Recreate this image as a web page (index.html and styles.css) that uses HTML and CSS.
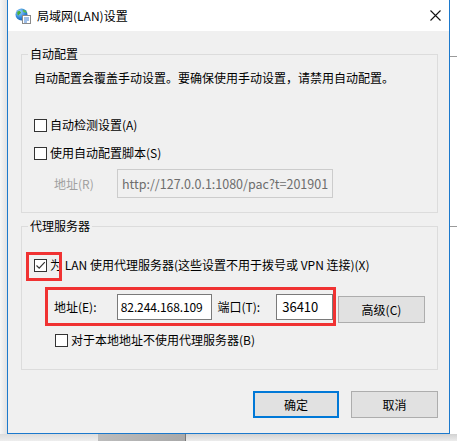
FILE: index.html
```html
<!DOCTYPE html>
<html lang="zh-CN">
<head>
<meta charset="utf-8">
<title>局域网(LAN)设置</title>
<link rel="stylesheet" href="styles.css">
</head>
<body>
<div class="screen">
  <div class="side-left"></div>
  <div class="dialog">
    <div class="titlebar">
      <svg class="app-icon" width="16" height="16" viewBox="0 0 16 16">
        <defs>
          <radialGradient id="gl" cx="0.35" cy="0.3" r="0.8">
            <stop offset="0" stop-color="#9fd4ff"/>
            <stop offset="0.6" stop-color="#2f86d8"/>
            <stop offset="1" stop-color="#1a5aa8"/>
          </radialGradient>
        </defs>
        <circle cx="6.5" cy="6.5" r="6" fill="url(#gl)"/>
        <path d="M2.5 3.5 C4 2.5 5.5 3 6 4.5 C5.5 6 4 6 3.5 7.5 C2.5 7 1.8 5.5 2.5 3.5 Z" fill="#4caf3a"/>
        <path d="M7.5 1.5 C9.5 1.8 11 3 11.8 4.5 C10.5 5 9 4.5 8.2 3.5 Z" fill="#5bbf42"/>
        <rect x="7.5" y="7.5" width="8" height="8" fill="#fff" stroke="#8a8a8a"/>
        <path d="M9 10h5M9 12h5M9 14h3" stroke="#3f7fd0" stroke-width="1"/>
      </svg>
      <span class="title">局域网(LAN)设置</span>
      <svg class="close" width="11" height="11" viewBox="0 0 11 11">
        <path d="M0.5 0.5L10.5 10.5M10.5 0.5L0.5 10.5" stroke="#111" stroke-width="1.1"/>
      </svg>
    </div>
    <div class="content">
      <fieldset class="group">
        <legend>自动配置</legend>
        <div class="gbody g1">
          <p class="desc">自动配置会覆盖手动设置。要确保使用手动设置，请禁用自动配置。</p>
          <div class="row cb-row r-detect"><span class="cb"></span><span>自动检测设置(A)</span></div>
          <div class="row cb-row r-script"><span class="cb"></span><span>使用自动配置脚本(S)</span></div>
          <div class="row addr-row">
            <span class="lbl disabled">地址(R)</span>
            <span class="input input-disabled"><span class="clip-text">http://127.0.0.1:1080/pac?t=20190117</span></span>
          </div>
        </div>
      </fieldset>
      <fieldset class="group g2-set">
        <legend>代理服务器</legend>
        <div class="gbody g2">
          <div class="row cb-row r-use">
            <span class="cb checked">
              <svg width="11" height="11" viewBox="0 0 11 11"><path d="M1.5 5.5L4.2 8.2L9.8 2.2" fill="none" stroke="#333" stroke-width="1.2"/></svg>
            </span>
            <span>为 LAN 使用代理服务器(这些设置不用于拨号或 VPN 连接)(X)</span>
            <span class="mark mark-cb"></span>
          </div>
          <div class="row proxy-row">
            <div class="mark-box">
              <span class="lbl lbl-addr">地址(E):</span>
              <span class="input input-addr">82.244.168.109</span>
              <span class="lbl lbl-port">端口(T):</span>
              <span class="input input-port">36410</span>
            </div>
            <span class="btn btn-adv">高级(C)</span>
          </div>
          <div class="row cb-row r-local"><span class="cb"></span><span>对于本地地址不使用代理服务器(B)</span></div>
        </div>
      </fieldset>
      <div class="actions">
        <span class="btn btn-ok">确定</span>
        <span class="btn btn-cancel">取消</span>
      </div>
    </div>
  </div>
  <div class="side-right">
    <div class="sr-line sr-1"></div>
    <div class="sr-line sr-2"></div>
  </div>
</div>
<div class="bottom-strip">
  <div class="bs-a"></div>
  <div class="bs-b"></div>
  <div class="bs-c"></div>
</div>
</body>
</html>
```

FILE: styles.css
```css
* { box-sizing: border-box; }

html, body {
  margin: 0;
  padding: 0;
}

body {
  width: 457px;
  height: 441px;
  overflow: hidden;
  background: #fff;
  font-family: "Noto Sans CJK SC", "Microsoft YaHei", sans-serif;
  font-size: 12px;
  color: #000;
}

.screen {
  display: flex;
  height: 434px;
}

.side-left {
  width: 7px;
  background: linear-gradient(to right, #f6f6f6, #e2e2e2);
}

.dialog {
  width: 443px;
  border: 1px solid #1c79cc;
  border-top: 0;
  background: #f0f0f0;
  display: flex;
  flex-direction: column;
}

.titlebar {
  height: 31px;
  flex: none;
  background: #fff;
  display: flex;
  align-items: center;
  padding-left: 7px;
}

.app-icon {
  flex: none;
  margin-right: 6px;
}

.title {
  flex: 1;
  font-size: 12px;
  line-height: 16px;
}

.close {
  flex: none;
  margin-right: 8px;
}

.content {
  flex: 1;
  padding: 15px 11px 0 13px;
  display: flex;
  flex-direction: column;
}

.group {
  margin: 0;
  padding: 0;
  border: 1px solid #dcdcdc;
  min-width: 0;
}

.group legend {
  margin-left: 6px;
  padding: 0 2px;
  line-height: 16px;
}

.g2-set {
  margin-top: 5px;
}

.gbody {
  padding: 0 12px;
}

.row {
  display: flex;
  align-items: center;
  line-height: 16px;
}

.desc {
  margin: 8px 0 0;
  line-height: 16px;
  white-space: nowrap;
}

.cb {
  flex: none;
  width: 13px;
  height: 13px;
  border: 1px solid #333;
  background: #fff;
  margin-right: 3px;
  display: flex;
  align-items: center;
  justify-content: center;
}

.r-detect { margin-top: 31px; }
.r-script { margin-top: 12px; }

.addr-row {
  margin-top: 8px;
  padding-left: 20px;
  padding-bottom: 14px;
}

.lbl.disabled {
  color: #a0a0a0;
  width: 63px;
}

.input {
  display: flex;
  align-items: center;
  background: #fff;
  border: 1px solid #7a7a7a;
  white-space: nowrap;
  overflow: hidden;
  font-size: 13px;
}

.input-disabled {
  width: 216px;
  height: 29px;
  background: #f0f0f0;
  border-color: #cccccc;
  color: #6d6d6d;
  padding-left: 4px;
  font-size: 12.5px;
}

.clip-text {
  flex: none;
  width: 206px;
  overflow: hidden;
}

.r-use {
  position: relative;
  margin-top: 23px;
}

.mark {
  position: absolute;
  border: 3px solid #f03232;
}

.mark-cb {
  left: -8px;
  top: -5px;
  width: 36px;
  height: 29px;
}

.proxy-row {
  margin-top: 14px;
  padding-left: 11px;
  align-items: flex-start;
}

.mark-box {
  display: flex;
  align-items: center;
  width: 291px;
  height: 39px;
  border: 3px solid #f03232;
  padding-left: 6px;
}

.lbl-addr { width: 63px; }
.lbl-port { width: 59px; margin-left: 5px; }

.input-addr {
  width: 96px;
  height: 26px;
  padding-left: 3px;
  font-size: 12px;
  letter-spacing: -0.1px;
}

.input-port {
  width: 57px;
  height: 26px;
  padding-left: 5px;
}

.btn {
  display: flex;
  align-items: center;
  justify-content: center;
  background: #e1e1e1;
  border: 1px solid #adadad;
  line-height: 16px;
}

.btn-adv {
  width: 87px;
  height: 27px;
  margin-left: 2px;
  margin-top: 9px;
}

.r-local {
  margin-top: 6px;
  padding-left: 21px;
  padding-bottom: 21px;
}

.actions {
  display: flex;
  justify-content: flex-end;
  gap: 12px;
  margin-top: 21px;
}

.btn-ok {
  width: 86px;
  height: 27px;
  border: 2px solid #0078d7;
}

.btn-cancel {
  width: 87px;
  height: 27px;
}

.side-right {
  width: 7px;
  background: #fff;
  display: flex;
  flex-direction: column;
}

.sr-line {
  height: 1px;
  background: #9a9a9a;
}

.sr-1 { margin-top: 56px; }
.sr-2 { margin-top: 169px; }

.bottom-strip {
  display: flex;
  height: 7px;
}

.bs-a {
  width: 98px;
  background: linear-gradient(to bottom, #dcdcdc, #eeeeee);
}

.bs-b {
  width: 88px;
  background: linear-gradient(to right, #bcbcbc, #a9a9a9);
  border-right: 1px solid #777;
}

.bs-c {
  flex: 1;
  background: linear-gradient(to bottom, #d2d2d2, #ececec);
}
```
